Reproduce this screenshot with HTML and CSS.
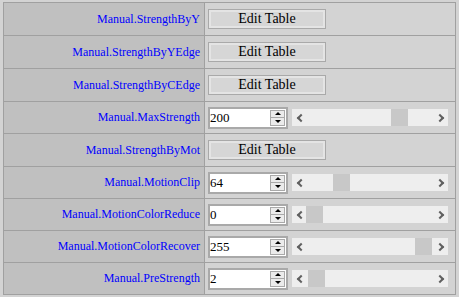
FILE: index.html
```html
<!DOCTYPE html>
<html lang="en">
<head>
    <meta charset="UTF-8">
    <title>Manual</title>
    <link rel="stylesheet" href="styles.css">
</head>
<body>
    <table class="params">
        <tr class="row-btn">
            <td class="label">Manual.StrengthByY</td>
            <td class="value"><button class="edit-btn">Edit Table</button></td>
        </tr>
        <tr class="row-btn">
            <td class="label">Manual.StrengthByYEdge</td>
            <td class="value"><button class="edit-btn">Edit Table</button></td>
        </tr>
        <tr class="row-btn">
            <td class="label">Manual.StrengthByCEdge</td>
            <td class="value"><button class="edit-btn">Edit Table</button></td>
        </tr>
        <tr class="row-num">
            <td class="label">Manual.MaxStrength</td>
            <td class="value">
                <div class="control">
                    <div class="spin"><span class="spin-text">200</span><span class="spin-btns"><span class="up"></span><span class="down"></span></span></div>
                    <div class="slider"><span class="arr left"></span><span class="track"><span class="thumb" style="margin-left: 85px"></span></span><span class="arr right"></span></div>
                </div>
            </td>
        </tr>
        <tr class="row-btn">
            <td class="label">Manual.StrengthByMot</td>
            <td class="value"><button class="edit-btn">Edit Table</button></td>
        </tr>
        <tr class="row-num">
            <td class="label">Manual.MotionClip</td>
            <td class="value">
                <div class="control">
                    <div class="spin"><span class="spin-text">64</span><span class="spin-btns"><span class="up"></span><span class="down"></span></span></div>
                    <div class="slider"><span class="arr left"></span><span class="track"><span class="thumb" style="margin-left: 27px"></span></span><span class="arr right"></span></div>
                </div>
            </td>
        </tr>
        <tr class="row-num">
            <td class="label">Manual.MotionColorReduce</td>
            <td class="value">
                <div class="control">
                    <div class="spin"><span class="spin-text">0</span><span class="spin-btns"><span class="up"></span><span class="down"></span></span></div>
                    <div class="slider"><span class="arr left"></span><span class="track"><span class="thumb" style="margin-left: 0px"></span></span><span class="arr right"></span></div>
                </div>
            </td>
        </tr>
        <tr class="row-num">
            <td class="label">Manual.MotionColorRecover</td>
            <td class="value">
                <div class="control">
                    <div class="spin"><span class="spin-text">255</span><span class="spin-btns"><span class="up"></span><span class="down"></span></span></div>
                    <div class="slider"><span class="arr left"></span><span class="track"><span class="thumb" style="margin-left: 109px"></span></span><span class="arr right"></span></div>
                </div>
            </td>
        </tr>
        <tr class="row-num">
            <td class="label">Manual.PreStrength</td>
            <td class="value">
                <div class="control">
                    <div class="spin"><span class="spin-text">2</span><span class="spin-btns"><span class="up"></span><span class="down"></span></span></div>
                    <div class="slider"><span class="arr left"></span><span class="track"><span class="thumb" style="margin-left: 2px"></span></span><span class="arr right"></span></div>
                </div>
            </td>
        </tr>
    </table>
</body>
</html>
```

FILE: styles.css
```css
body {
    margin: 0;
    padding: 2px 3px;
    background-color: #d3d3d3;
    font-family: "Liberation Serif", "Times New Roman", serif;
}
.params {
    border-collapse: collapse;
    width: 453px;
    border: 1px solid #a0a0a0;
}
.params td {
    border: 1px solid #a0a0a0;
    padding: 0;
    vertical-align: middle;
}
.row-btn td {
    height: 32px;
}
.row-num td {
    height: 31px;
}
.label {
    width: 196px;
    background-color: #c0c0c0;
    color: #0000ff;
    font-size: 12px;
    text-align: right;
    padding-right: 4px !important;
    white-space: nowrap;
}
.value {
    background-color: #d3d3d3;
    padding-left: 3px !important;
}
.edit-btn {
    display: block;
    width: 118px;
    height: 20px;
    margin: 0;
    padding: 0;
    font-family: "Liberation Serif", "Times New Roman", serif;
    font-size: 14px;
    color: #000;
    background-color: #d6d6d6;
    border: 1px solid #a9a9a9;
    box-shadow: inset 0 0 0 2px #e4e4e4;
}
.control {
    display: flex;
    align-items: center;
}
.spin {
    display: flex;
    width: 80px;
    height: 22px;
    box-sizing: border-box;
    border: 2px solid #a9a9a9;
    background-color: #fff;
}
.spin-text {
    flex: 1;
    font-size: 13px;
    line-height: 18px;
    color: #000;
}
.spin-btns {
    display: flex;
    flex-direction: column;
    width: 13px;
    margin: 1px 1px 1px 0;
    border: 1px solid #a9a9a9;
}
.spin-btns span {
    flex: 1;
    display: flex;
    align-items: center;
    justify-content: center;
    background-color: #ebebeb;
}
.spin-btns .up {
    border-bottom: 1px solid #a9a9a9;
}
.spin-btns .up::before,
.spin-btns .down::before {
    content: "";
    border-left: 3px solid transparent;
    border-right: 3px solid transparent;
}
.spin-btns .up::before {
    border-bottom: 3px solid #000;
}
.spin-btns .down::before {
    border-top: 3px solid #000;
}
.slider {
    display: flex;
    align-items: center;
    width: 156px;
    height: 17px;
    margin-left: 4px;
    background-color: #eeeeee;
}
.arr {
    width: 14px;
    height: 17px;
    display: flex;
    align-items: center;
    justify-content: center;
}
.arr::before {
    content: "";
    width: 4px;
    height: 4px;
    border-top: 2px solid #606060;
    border-left: 2px solid #606060;
}
.arr.left::before {
    transform: rotate(-45deg);
    margin-left: 3px;
}
.arr.right::before {
    transform: rotate(135deg);
    margin-right: 3px;
}
.track {
    flex: 1;
    display: flex;
    height: 17px;
}
.thumb {
    width: 17px;
    height: 17px;
    background-color: #c8c8c8;
}
```
